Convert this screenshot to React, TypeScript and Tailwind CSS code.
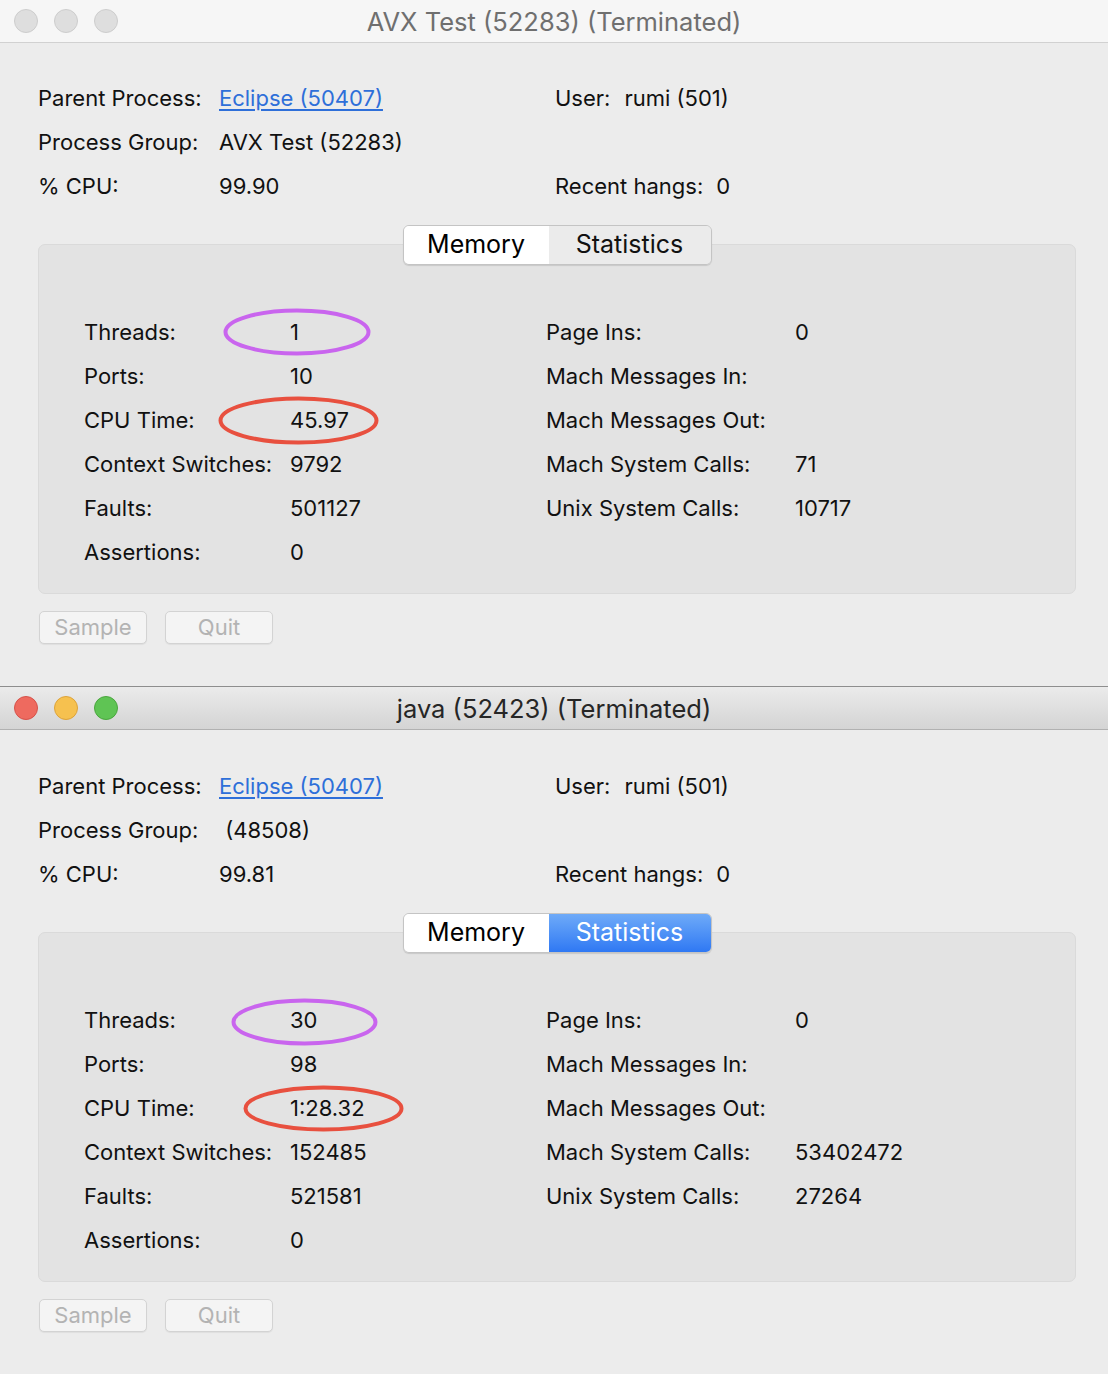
import React from 'react'

type Stat = { label: string; value: string; ring?: { color: string; left: number; top: number; w: number; h: number } }

type WinProps = {
  title: string
  active: boolean
  group: string
  cpu: string
  statsTab: boolean
  left: Stat[]
  right: Stat[]
}

const font = { fontFamily: 'Inter, "Noto Sans", "Liberation Sans", sans-serif' }

const Ring = ({ color, left, top, w, h }: { color: string; left: number; top: number; w: number; h: number }) => (
  <svg className="absolute pointer-events-none" style={{ left, top }} width={w} height={h} viewBox={`0 0 ${w} ${h}`}>
    <ellipse cx={w / 2} cy={h / 2} rx={w / 2 - 2.5} ry={h / 2 - 2.5} fill="none" stroke={color} strokeWidth={4} />
  </svg>
)

const Lights = ({ active }: { active: boolean }) => (
  <div className="flex items-center gap-4 pl-[14px]">
    {active ? (
      <>
        <span className="w-6 h-6 rounded-full bg-[#ee6a5f] border border-[#d6524a]" />
        <span className="w-6 h-6 rounded-full bg-[#f6c14f] border border-[#dda33a]" />
        <span className="w-6 h-6 rounded-full bg-[#5fc454] border border-[#4aa63e]" />
      </>
    ) : (
      <>
        <span className="w-6 h-6 rounded-full bg-[#dedede] border border-[#cdcdcd]" />
        <span className="w-6 h-6 rounded-full bg-[#dedede] border border-[#cdcdcd]" />
        <span className="w-6 h-6 rounded-full bg-[#dedede] border border-[#cdcdcd]" />
      </>
    )}
  </div>
)

const StatRow = ({ s, labelW, valueW }: { s: Stat; labelW: string; valueW: string }) => (
  <div className="flex h-[44px] items-center">
    <span className={labelW}>{s.label}</span>
    <span className={`relative ${valueW}`}>
      {s.value}
      {s.ring && <Ring {...s.ring} />}
    </span>
  </div>
)

const ProcessWindow = ({ title, active, group, cpu, statsTab, left, right }: WinProps) => (
  <div className={`bg-[#ececec] ${active ? 'border-t border-[#8e8e8e]' : ''}`}>
    {/* title bar */}
    <div
      className={`relative h-[43px] flex items-center border-b ${
        active ? 'bg-gradient-to-b from-[#ebebeb] to-[#d4d4d4] border-[#b1b1b1]' : 'bg-[#f6f6f6] border-[#d1d1d1]'
      }`}
    >
      <Lights active={active} />
      <div
        className={`absolute inset-0 pt-[2px] flex items-center justify-center text-[25.5px] ${active ? 'text-[#262626]' : 'text-[#6f6f6f]'}`}
      >
        {title}
      </div>
    </div>

    <div className={`pl-[38px] pr-[32px] pb-[42px] text-[22px] text-[#111] ${active ? 'pt-[34px]' : 'pt-[33px]'}`}>
      {/* process info */}
      <div className="flex h-[44px] items-center">
        <span className="w-[181px]">Parent Process:</span>
        <span className="w-[336px] text-[#2e6fd9] underline underline-offset-[3px]">Eclipse (50407)</span>
        <span>User:</span>
        <span className="ml-[14px]">rumi (501)</span>
      </div>
      <div className="flex h-[44px] items-center">
        <span className="w-[181px]">Process Group:</span>
        <span className="w-[336px] whitespace-pre">{group}</span>
      </div>
      <div className="flex h-[44px] items-center">
        <span className="w-[181px]">% CPU:</span>
        <span className="w-[336px]">{cpu}</span>
        <span>Recent hangs:</span>
        <span className="ml-[13px]">0</span>
      </div>

      {/* tabs */}
      <div className="relative z-10 mt-[17px] flex justify-center">
        <div className="flex h-[40px] rounded-[6px] border border-[#c4c4c4] shadow-[0_1px_1px_rgba(0,0,0,0.12)] overflow-hidden text-[25px]">
          <div className="w-[145px] bg-white flex items-center justify-center text-black">Memory</div>
          <div
            className={`w-[162px] flex items-center justify-center ${
              statsTab ? 'bg-gradient-to-b from-[#6eaaf8] to-[#2f78f3] text-white' : 'bg-[#ebebeb] text-[#111]'
            }`}
          >
            Statistics
          </div>
        </div>
      </div>

      {/* tab panel */}
      <div className="mt-[-21px] h-[350px] rounded-[7px] bg-[#e3e3e3] border border-[#dadada] pt-[65px] pl-[45px] flex">
        <div>
          {left.map((s) => (
            <StatRow key={s.label} s={s} labelW="w-[206px]" valueW="w-[256px]" />
          ))}
        </div>
        <div>
          {right.map((s) => (
            <StatRow key={s.label} s={s} labelW="w-[249px]" valueW="w-[120px]" />
          ))}
        </div>
      </div>

      {/* buttons */}
      <div className="mt-[17px] flex gap-[18px] pl-[1px]">
        <button className="w-[108px] h-[33px] rounded-[5px] bg-[#f4f4f4] border border-[#d3d3d3] shadow-[0_1px_1px_rgba(0,0,0,0.06)] text-[#b3b3b3] text-[22px] flex items-center justify-center">
          Sample
        </button>
        <button className="w-[108px] h-[33px] rounded-[5px] bg-[#f4f4f4] border border-[#d3d3d3] shadow-[0_1px_1px_rgba(0,0,0,0.06)] text-[#b3b3b3] text-[22px] flex items-center justify-center">
          Quit
        </button>
      </div>
    </div>
  </div>
)

const purple = '#c965ee'
const red = '#e8503f'

export default function App() {
  return (
    <div className="w-[1108px] h-[1374px] overflow-hidden bg-[#ececec]" style={font}>
      <ProcessWindow
        title="AVX Test (52283) (Terminated)"
        active={false}
        group="AVX Test (52283)"
        cpu="99.90"
        statsTab={false}
        left={[
          { label: 'Threads:', value: '1', ring: { color: purple, left: -67, top: -8, w: 148, h: 48 } },
          { label: 'Ports:', value: '10' },
          { label: 'CPU Time:', value: '45.97', ring: { color: red, left: -72, top: -8, w: 161, h: 49 } },
          { label: 'Context Switches:', value: '9792' },
          { label: 'Faults:', value: '501127' },
          { label: 'Assertions:', value: '0' },
        ]}
        right={[
          { label: 'Page Ins:', value: '0' },
          { label: 'Mach Messages In:', value: '' },
          { label: 'Mach Messages Out:', value: '' },
          { label: 'Mach System Calls:', value: '71' },
          { label: 'Unix System Calls:', value: '10717' },
        ]}
      />
      <ProcessWindow
        title="java (52423) (Terminated)"
        active={true}
        group=" (48508)"
        cpu="99.81"
        statsTab={true}
        left={[
          { label: 'Threads:', value: '30', ring: { color: purple, left: -59, top: -6, w: 147, h: 48 } },
          { label: 'Ports:', value: '98' },
          { label: 'CPU Time:', value: '1:28.32', ring: { color: red, left: -47, top: -7, w: 161, h: 47 } },
          { label: 'Context Switches:', value: '152485' },
          { label: 'Faults:', value: '521581' },
          { label: 'Assertions:', value: '0' },
        ]}
        right={[
          { label: 'Page Ins:', value: '0' },
          { label: 'Mach Messages In:', value: '' },
          { label: 'Mach Messages Out:', value: '' },
          { label: 'Mach System Calls:', value: '53402472' },
          { label: 'Unix System Calls:', value: '27264' },
        ]}
      />
    </div>
  )
}
